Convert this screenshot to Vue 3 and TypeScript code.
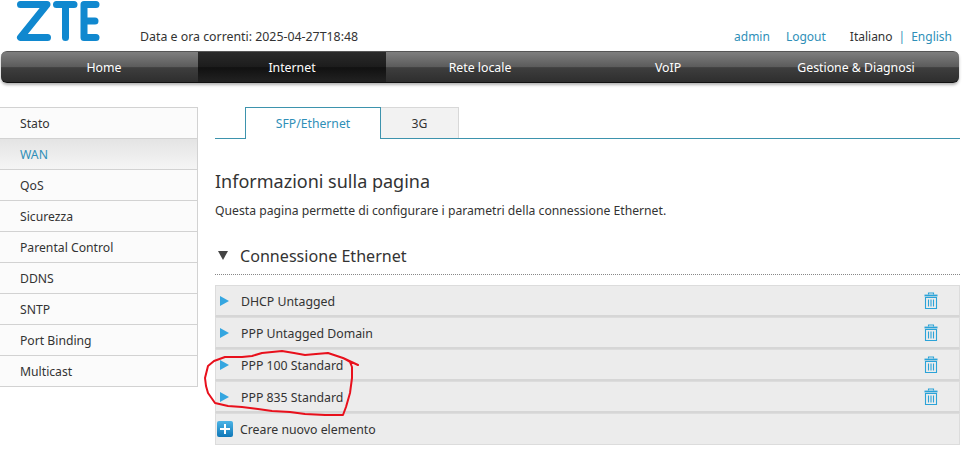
<script setup lang="ts">
const navItems = ['Home', 'Internet', 'Rete locale', 'VoIP', 'Gestione & Diagnosi']
const sideItems = ['Stato', 'WAN', 'QoS', 'Sicurezza', 'Parental Control', 'DDNS', 'SNTP', 'Port Binding', 'Multicast']
const rows = ['DHCP Untagged', 'PPP Untagged Domain', 'PPP 100 Standard', 'PPP 835 Standard']
</script>

<template>
  <div class="page">
    <header class="top">
      <svg class="logo" width="90" height="44" viewBox="0 0 90 44" aria-label="ZTE">
        <path d="M6.500 4.500H33L6.500 37.500H33.500" fill="none" stroke="#1088cf" stroke-width="7" stroke-linecap="round" stroke-linejoin="round" />
        <path d="M42.500 4.500H60M51.500 4.500V37.500" fill="none" stroke="#1088cf" stroke-width="7" stroke-linecap="round" />
        <path d="M82 4.500H70V37.500H82M70 21H81" fill="none" stroke="#1088cf" stroke-width="7" stroke-linecap="round" stroke-linejoin="round" />
      </svg>
      <div class="clock">Data e ora correnti: 2025-04-27T18:48</div>
      <div class="links">
        <a class="link">admin</a>
        <a class="link logout">Logout</a>
        <span class="lang">Italiano</span>
        <span class="sep">|</span>
        <a class="link">English</a>
      </div>
    </header>

    <nav class="nav">
      <div v-for="item in navItems" :key="item" class="nav-item" :class="{ active: item === 'Internet' }">{{ item }}</div>
    </nav>

    <div class="body">
      <aside class="side">
        <div v-for="item in sideItems" :key="item" class="side-item" :class="{ current: item === 'WAN' }">{{ item }}</div>
      </aside>

      <main class="main">
        <div class="tabs">
          <div class="tab selected">SFP/Ethernet</div>
          <div class="tab">3G</div>
        </div>

        <h1 class="title">Informazioni sulla pagina</h1>
        <p class="desc">Questa pagina permette di configurare i parametri della connessione Ethernet.</p>

        <div class="section">
          <span class="down"></span>
          <span>Connessione Ethernet</span>
        </div>

        <div class="list">
          <div v-for="row in rows" :key="row" class="row">
            <span class="tri"></span>
            <span class="label">{{ row }}</span>
            <svg class="trash" width="16" height="18" viewBox="0 0 16 18">
              <g fill="none" stroke="#2ba3d8" stroke-width="1.100">
                <path d="M5.500 2.500V1h5v1.500" />
                <path d="M1.500 3.500H14.500" stroke-width="1.800" />
                <path d="M2.500 5.500V16.500H13.500V5.500Z" />
                <path d="M5.500 7.500V14.500M8 7.500V14.500M10.500 7.500V14.500" />
              </g>
            </svg>
          </div>
          <div class="row add">
            <span class="plus"></span>
            <span class="label">Creare nuovo elemento</span>
          </div>
          <svg class="scribble" width="170" height="80" viewBox="0 0 170 80">
            <path d="M25 12L14 16L8 21L5 33L6 41L8 48L15 58L28 61L42 62L58 64L72 66L90 67L105 69L125 70L143 70L146 62L150 48L152 33L152 22L150 17L143 13L128 8L116 9L105 10L94 8L82 6L72 7L62 8L52 11L42 12L25 12M143 13L158 20" fill="none" stroke="#e8101c" stroke-width="2" stroke-linecap="round" stroke-linejoin="round" />
          </svg>
        </div>
      </main>
    </div>
  </div>
</template>

<style>
html, body { margin: 0; background: #fff; }
</style>

<style scoped>
.page {
  width: 973px;
  height: 458px;
  overflow: hidden;
  font-family: "Noto Sans", "Open Sans", sans-serif;
  font-size: 12.200px;
  color: #333;
  box-sizing: border-box;
}
.top {
  height: 51px;
  display: flex;
  align-items: flex-end;
  padding-left: 14px;
  width: 952px;
  box-sizing: border-box;
}
.logo { align-self: flex-start; margin-right: 36px; flex: none; }
.clock { padding-bottom: 6px; line-height: 16px; font-size: 12.350px; }
.links { margin-left: auto; display: flex; padding-bottom: 6px; line-height: 16px; font-size: 12px; }
.link { color: #2f8fb8; }
.logout { margin-left: 16px; }
.lang { margin-left: 24px; }
.sep { margin: 0 6px; color: #2f8fb8; }
.nav {
  margin-left: 1px;
  width: 958px;
  height: 32px;
  box-sizing: border-box;
  padding-left: 9px;
  display: flex;
  border-radius: 6px;
  background: linear-gradient(#7e7e7e 0, #5b5b5b 50%, #3e3e3e 52%, #2e2e2e 100%);
  border-top: 1px solid #555;
  border-bottom: 1px solid #111;
  box-shadow: 0 2px 3px rgba(0, 0, 0, .3);
}
.nav-item {
  width: 188px;
  text-align: center;
  color: #fff;
  font-size: 12.300px;
  line-height: 31px;
}
.nav-item.active { background: linear-gradient(#2a2a2a 0, #1c1c1c 50%, #111 52%, #222 100%); }
.body { display: flex; margin-top: 24px; }
.side { width: 198px; flex: none; border: 1px solid #d2d2d2; border-left: 0; box-sizing: border-box; align-self: flex-start; }
.side-item {
  height: 31px;
  line-height: 31px;
  box-sizing: border-box;
  padding-left: 20px;
  color: #333;
  background: #fbfbfb;
  border-bottom: 1px solid #d2d2d2;
}
.side-item:last-child { height: 30px; border-bottom: 0; }
.side-item.current {
  color: #2f8fb8;
  background: linear-gradient(#e4e4e4, #f5f5f5);
}
.main { margin-left: 17px; width: 745px; }
.tabs {
  display: flex;
  height: 32px;
  box-sizing: border-box;
  padding-left: 30px;
  border-bottom: 1px solid #3d93ad;
}
.tab {
  width: 78px;
  height: 31px;
  box-sizing: border-box;
  text-align: center;
  line-height: 31px;
  background: #f2f2f2;
  border: 1px solid #d8d8d8;
  border-bottom: 0;
  border-left: 0;
}
.tab.selected {
  width: 136px;
  height: 32px;
  color: #2f8fb8;
  background: #fff;
  border: 1px solid #3d93ad;
  border-bottom: 0;
}
.title { margin: 30px 0 0; font-size: 18px; font-weight: 400; line-height: 24px; color: #333; }
.desc { margin: 9px 0 0; line-height: 17px; color: #333; }
.section {
  margin-top: 24px;
  height: 32px;
  display: flex;
  align-items: center;
  font-size: 16.100px;
  border-bottom: 1px dotted #888;
  box-sizing: border-box;
  padding-bottom: 6px;
}
.down {
  width: 0; height: 0;
  margin: 0 12px 0 3px;
  border-left: 5.500px solid transparent;
  border-right: 5.500px solid transparent;
  border-top: 9px solid #444;
}
.list { position: relative; margin-top: 10px; }
.row {
  height: 32px;
  box-sizing: border-box;
  display: flex;
  align-items: center;
  background: #ececec;
  border: 1px solid #dcdcdc;
  border-bottom: 2px solid #d6d6d6;
  padding: 1px 0 0 4px;
  position: relative;
}
.row.add { border-bottom: 1px solid #dcdcdc; padding: 0 0 0 5px; }
.tri {
  width: 0; height: 0;
  border-top: 5px solid transparent;
  border-bottom: 5px solid transparent;
  border-left: 9px solid #35a6e0;
  margin-top: 0;
}
.label { margin-left: 12px; color: #333; font-size: 12.300px; }
.row.add .label { margin-left: 7px; }
.plus {
  width: 16px; height: 16px;
  border-radius: 2px;
  position: relative;
  margin-left: -4px;
  background: linear-gradient(#4cb4e6, #1078b8);
}
.plus::before, .plus::after { content: ""; position: absolute; background: #fff; }
.plus::before { left: 3px; right: 3px; top: 7px; height: 2px; }
.plus::after { top: 3px; bottom: 3px; left: 7px; width: 2px; }
.trash { margin-left: auto; margin-right: 20px; }
.scribble { position: absolute; left: -15px; top: 60px; pointer-events: none; }
</style>
